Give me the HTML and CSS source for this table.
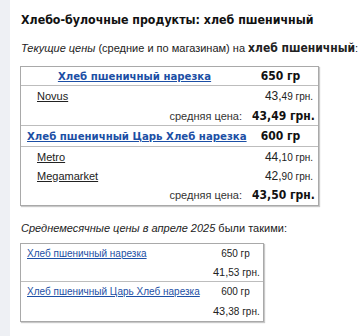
FILE: index.html
```html
<!DOCTYPE html>
<html lang="ru">
<head>
<meta charset="utf-8">
<title>Хлеб пшеничный</title>
<link rel="stylesheet" href="styles.css">
</head>
<body>
<div class="side"></div>
<main class="content">
  <h1 class="title">Хлебо-булочные продукты: хлеб пшеничный</h1>
  <p class="lead"><i>Текущие цены</i> (средние и по магазинам) на <b class="strong">хлеб пшеничный</b>:</p>

  <table class="prices">
    <colgroup><col><col class="col-weight"></colgroup>
    <tr class="head first-head">
      <td class="name center"><a href="#">Хлеб пшеничный нарезка</a></td>
      <td class="weight">650 гр</td>
    </tr>
    <tr class="shop">
      <td class="store"><a href="#">Novus</a></td>
      <td class="cost">43,<small>49 грн.</small></td>
    </tr>
    <tr class="avg">
      <td class="avg-label">средняя цена:</td>
      <td class="avg-cost">43,49 грн.</td>
    </tr>
    <tr class="head">
      <td class="name"><a href="#">Хлеб пшеничный Царь Хлеб нарезка</a></td>
      <td class="weight">600 гр</td>
    </tr>
    <tr class="shop short">
      <td class="store"><a href="#">Metro</a></td>
      <td class="cost">44,<small>10 грн.</small></td>
    </tr>
    <tr class="shop short">
      <td class="store"><a href="#">Megamarket</a></td>
      <td class="cost">42,<small>90 грн.</small></td>
    </tr>
    <tr class="avg last">
      <td class="avg-label">средняя цена:</td>
      <td class="avg-cost">43,50 грн.</td>
    </tr>
  </table>

  <p class="lead month"><i>Среднемесячные цены в апреле 2025</i> были такими:</p>

  <table class="monthly">
    <colgroup><col><col class="col-m-weight"></colgroup>
    <tr>
      <td class="m-name"><a href="#">Хлеб пшеничный нарезка</a></td>
      <td class="m-weight">650 гр</td>
    </tr>
    <tr class="m-end">
      <td></td>
      <td class="m-cost">41,<small>53 грн.</small></td>
    </tr>
    <tr>
      <td class="m-name"><a href="#">Хлеб пшеничный Царь Хлеб нарезка</a></td>
      <td class="m-weight">600 гр</td>
    </tr>
    <tr class="m-last">
      <td></td>
      <td class="m-cost">43,<small>38 грн.</small></td>
    </tr>
  </table>
</main>
</body>
</html>
```

FILE: styles.css
```css
html, body {
  margin: 0;
  padding: 0;
  background: #ffffff;
}

body {
  display: flex;
  min-height: 336px;
  font-family: "Liberation Sans", Arial, sans-serif;
  font-size: 11px;
  color: #222222;
}

.side {
  width: 10px;
  flex: none;
  background: #eef0f4;
}

.content {
  flex: 1;
  padding: 8px 0 0 10px;
}

td {
  white-space: nowrap;
  box-sizing: border-box;
  padding: 0 5px;
  vertical-align: middle;
}

.title {
  margin: 0 0 0 1px;
  font-family: "DejaVu Sans Condensed", "DejaVu Sans", sans-serif;
  font-size: 12.3px;
  font-weight: bold;
  line-height: 24px;
  color: #111111;
}

.lead {
  margin: 9px 0 0 1px;
  line-height: 14px;
}

.strong {
  font-family: "DejaVu Sans Condensed", "DejaVu Sans", sans-serif;
  font-size: 12px;
}

a {
  color: #1c4fa5;
  text-decoration: underline;
}

/* current prices: product headers, shop rows, averages */
.prices {
  margin: 11px 0 0 0;
  width: 299px;
  table-layout: fixed;
  border-collapse: separate;
  border-spacing: 0;
  border: 1px solid #a9a9a9;
  box-shadow: 1px 1px 1px #c8c8c8;
}

.col-weight {
  width: 71px;
}

.head td {
  height: 21px;
  border-bottom: 1px solid #bdbdbd;
  font-family: "DejaVu Sans Condensed", "DejaVu Sans", sans-serif;
  font-weight: bold;
  font-size: 11.3px;
}

.first-head td {
  height: 19px;
}

.name {
  padding-left: 6px;
}

.center {
  text-align: center;
}

.prices .weight {
  padding: 0 7px 0 3px;
  text-align: center;
  font-size: 12px;
  color: #111111;
}

.shop td {
  height: 20px;
}

.shop.short td {
  height: 19px;
}

.prices .store {
  padding-left: 16px;
}

.store a {
  color: #222222;
}

.cost, .m-cost {
  text-align: right;
  font-size: 12px;
}

.cost small, .m-cost small {
  font-size: 10px;
}

.avg td {
  height: 20px;
  border-bottom: 1px solid #bdbdbd;
}

.avg.last td {
  border-bottom: 0;
}

.avg-label {
  text-align: right;
  font-size: 11px;
  color: #333333;
}

.avg-cost {
  text-align: right;
  font-family: "DejaVu Sans Condensed", "DejaVu Sans", sans-serif;
  font-weight: bold;
  font-size: 12px;
  color: #111111;
}

.month {
  margin-top: 15px;
}

/* monthly averages */
.monthly {
  margin-top: 8px;
  width: 244px;
  table-layout: fixed;
  border-collapse: separate;
  border-spacing: 0;
  border: 1px solid #a9a9a9;
  box-shadow: 1px 1px 1px #c8c8c8;
  font-size: 10px;
}

.col-m-weight {
  width: 55px;
}

.monthly td {
  height: 19px;
}

.monthly .m-name {
  padding-left: 6px;
}

.m-weight {
  text-align: center;
}

.m-cost {
  font-size: 11px;
}

.m-end td {
  border-bottom: 1px solid #bdbdbd;
}

.m-last td {
  height: 20px;
}
```
